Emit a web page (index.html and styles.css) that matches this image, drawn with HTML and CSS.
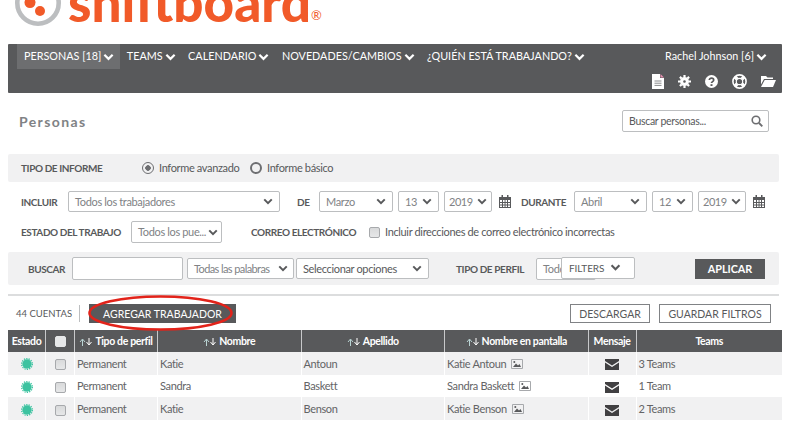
FILE: index.html
```html
<!DOCTYPE html>
<html lang="es">
<head>
<meta charset="utf-8">
<title>Personas</title>
<link rel="stylesheet" href="styles.css">
</head>
<body>
<svg class="defs" width="0" height="0">
  <defs>
    <symbol id="chev" viewBox="0 0 12 8"><path d="M1.500 1.500 6 6l4.500-4.500" fill="none" stroke="currentColor" stroke-width="2.400"/></symbol>
    <symbol id="cal" viewBox="0 0 12 13"><path d="M0 2h12v11H0zM1 5v2h2V5zm3 0v2h1.600V5zm2.500 0v2H8V5zM9 5v2h2V5zM1 8v1.600h2V8zm3 0v1.600h1.600V8zm2.500 0v1.600H8V8zM9 8v1.600h2V8zM1 10.500V12h2v-1.500zm3 0V12h1.600v-1.500zm2.500 0V12H8v-1.500zm2.500 0V12h2v-1.500z" fill="#58595b" fill-rule="evenodd"/><path d="M2.500 0h1.500v3H2.500zM8 0h1.500v3H8z" fill="#58595b"/></symbol>
    <symbol id="sort" viewBox="0 0 14 8"><path d="M3.500 8V1.500M1 4l2.500-3L6 4" fill="none" stroke="#b9d3d3" stroke-width="1"/><path d="M10 0v6.500M7.500 4 10 7l2.500-3" fill="none" stroke="#fff" stroke-width="1"/></symbol>
    <symbol id="mail" viewBox="0 0 14 11"><path d="M0 0h14v2L7 6.500 0 2z" fill="#414042"/><path d="M0 3.500 7 8l7-4.500V11H0z" fill="#414042"/></symbol>
    <symbol id="pic" viewBox="0 0 12 10"><path d="M.5.500h11v9H.500z" fill="none" stroke="#a7a9ac"/><path d="M2 8 5 4.500 7 6.500 8.500 5 10 8z" fill="#58595b"/><circle cx="3.300" cy="3" r="1" fill="#58595b"/></symbol>
    <symbol id="burst" viewBox="0 0 12 12"><circle cx="6" cy="6" r="4.700" fill="#3cc3a0"/><circle cx="6" cy="6" r="5.400" fill="none" stroke="#3cc3a0" stroke-width="1.200" stroke-dasharray="1.300 1.100"/></symbol>
  </defs>
</svg>

<header class="brand">
  <div class="brand-inner">
    <svg class="brand-mark" viewBox="0 0 46 46" width="46" height="46">
      <circle cx="23" cy="23" r="20.700" fill="none" stroke="#bcbec0" stroke-width="4.600"/>
      <circle cx="15" cy="22.500" r="5.500" fill="#f15a29"/>
      <circle cx="25" cy="31" r="5" fill="#f15a29"/>
      <circle cx="24" cy="12" r="5" fill="#f15a29"/>
    </svg>
    <span class="brand-name">shiftboard</span><span class="brand-reg">®</span>
  </div>
</header>

<nav class="nav">
  <div class="nav-top">
    <ul class="nav-menu">
      <li class="nav-item is-active">PERSONAS [18]<svg class="nav-chev"><use href="#chev"/></svg></li>
      <li class="nav-item">TEAMS<svg class="nav-chev"><use href="#chev"/></svg></li>
      <li class="nav-item">CALENDARIO<svg class="nav-chev"><use href="#chev"/></svg></li>
      <li class="nav-item">NOVEDADES/CAMBIOS<svg class="nav-chev"><use href="#chev"/></svg></li>
      <li class="nav-item">¿QUIÉN ESTÁ TRABAJANDO?<svg class="nav-chev"><use href="#chev"/></svg></li>
    </ul>
    <div class="nav-user">Rachel Johnson [6]<svg class="nav-chev"><use href="#chev"/></svg></div>
  </div>
  <div class="nav-icons">
    <svg width="12" height="15" viewBox="0 0 12 15"><path d="M0 0h8v4h4v11H0z" fill="#fff"/><path d="M8.500 0 12 3.500H8.500z" fill="#e58fb0"/><path d="M2.500 7h7M2.500 9.200h7M2.500 11.400h7" stroke="#8a8b8d" stroke-width="1"/></svg>
    <svg width="13" height="13" viewBox="0 0 13 13"><path d="M6.500 3.600a2.900 2.900 0 1 0 0 5.800 2.900 2.900 0 0 0 0-5.800z" fill="none" stroke="#fff" stroke-width="3.200"/><path d="M6.500 0v13M0 6.500h13M1.900 1.900l9.200 9.200M11.100 1.900l-9.200 9.200" stroke="#fff" stroke-width="2.200" stroke-dasharray="2.300 8.400 2.300"/></svg>
    <svg width="13" height="13" viewBox="0 0 13 13"><circle cx="6.500" cy="6.500" r="6.500" fill="#fff"/><path d="M4.300 5.100c0-2.700 4.400-2.700 4.400 0 0 1.600-2.200 1.500-2.200 3" fill="none" stroke="#58595b" stroke-width="1.700"/><path d="M5.500 9.200h2v1.800h-2z" fill="#58595b"/></svg>
    <svg width="15" height="15" viewBox="0 0 15 15"><circle cx="7.500" cy="7.500" r="6.600" fill="none" stroke="#fff" stroke-width="1.600"/><path d="M3 3l2.500 2.500M12 3 9.500 5.500M3 12l2.500-2.500M12 12 9.500 9.500" stroke="#fff" stroke-width="3.400"/><circle cx="7.500" cy="7.500" r="3.200" fill="#58595b" stroke="#fff" stroke-width="1.200"/></svg>
    <svg width="15" height="12" viewBox="0 0 15 12"><path d="M0 1h5l1.500 1.500H12V4H3L0 9.500z" fill="#fff"/><path d="M3.700 5H15l-3 7H0z" fill="#fff"/></svg>
  </div>
</nav>

<section class="title-row">
  <h1 class="title">Personas</h1>
  <div class="search">Buscar personas...
    <svg class="search-icon" width="12" height="12" viewBox="0 0 12 12"><circle cx="5" cy="5" r="3.800" fill="none" stroke="#6d6e71" stroke-width="1.600"/><path d="M8 8l3.300 3.300" stroke="#6d6e71" stroke-width="1.900"/></svg>
  </div>
</section>

<section class="band band-report">
  <span class="label w-report">TIPO DE INFORME</span>
  <span class="radio is-on"></span><span class="opt">Informe avanzado</span>
  <span class="radio"></span><span class="opt">Informe básico</span>
</section>

<section class="row row-dates">
  <span class="label w-42">INCLUIR</span>
  <div class="sel w-212">Todos los trabajadores<svg class="sel-chev"><use href="#chev"/></svg></div>
  <span class="label w-17 ml-12">DE</span>
  <div class="sel w-74">Marzo<svg class="sel-chev"><use href="#chev"/></svg></div>
  <div class="sel w-41">13<svg class="sel-chev"><use href="#chev"/></svg></div>
  <div class="sel w-48 sel-year">2019<svg class="sel-chev"><use href="#chev"/></svg></div>
  <svg class="cal"><use href="#cal"/></svg>
  <span class="label w-48 ml-5">DURANTE</span>
  <div class="sel w-73">Abril<svg class="sel-chev"><use href="#chev"/></svg></div>
  <div class="sel w-41">12<svg class="sel-chev"><use href="#chev"/></svg></div>
  <div class="sel w-48 sel-year">2019<svg class="sel-chev"><use href="#chev"/></svg></div>
  <svg class="cal"><use href="#cal"/></svg>
</section>

<section class="row row-status">
  <span class="label w-99">ESTADO DEL TRABAJO</span>
  <div class="sel w-91 ml-11 sel-tight">Todos los pue...<svg class="sel-chev"><use href="#chev"/></svg></div>
  <span class="label w-103 ml-29">CORREO ELECTRÓNICO</span>
  <span class="check ml-15"></span>
  <span class="opt ml-5">Incluir direcciones de correo electrónico incorrectas</span>
</section>

<section class="band band-search">
  <span class="label w-36">BUSCAR</span>
  <div class="field"></div>
  <div class="sel w-107 ml-4 sel-narrow">Todas las palabras<svg class="sel-chev"><use href="#chev"/></svg></div>
  <div class="sel w-133 ml-2 sel-dark">Seleccionar opciones<svg class="sel-chev"><use href="#chev"/></svg></div>
  <span class="label w-69 ml-27">TIPO DE PERFIL</span>
  <div class="profile">
    <div class="sel w-60 ml-11 profile-base">Todos</div>
    <div class="filters">FILTERS<svg class="sel-chev"><use href="#chev"/></svg></div>
  </div>
  <button class="apply">APLICAR</button>
</section>

<hr class="rule">

<section class="toolbar">
  <span class="count">44 CUENTAS</span>
  <span class="sep"></span>
  <div class="add-wrap">
    <button class="add">AGREGAR TRABAJADOR</button>
    <svg class="ring" width="148" height="37" viewBox="0 0 148 37"><ellipse cx="72.500" cy="18" rx="71" ry="16.500" fill="none" stroke="#e2231a" stroke-width="2.600"/></svg>
  </div>
  <button class="ghost ghost-first">DESCARGAR</button>
  <button class="ghost">GUARDAR FILTROS</button>
</section>

<table class="grid">
  <colgroup>
    <col class="c-state"><col class="c-check"><col class="c-type"><col class="c-name"><col class="c-name"><col class="c-name"><col class="c-msg"><col class="c-team">
  </colgroup>
  <thead>
    <tr>
      <th>Estado</th>
      <th><span class="check check-head"></span></th>
      <th><svg class="sort"><use href="#sort"/></svg>Tipo de perfil</th>
      <th><svg class="sort"><use href="#sort"/></svg>Nombre</th>
      <th><svg class="sort"><use href="#sort"/></svg>Apellido</th>
      <th><svg class="sort"><use href="#sort"/></svg>Nombre en pantalla</th>
      <th>Mensaje</th>
      <th>Teams</th>
    </tr>
  </thead>
  <tbody>
    <tr>
      <td class="mid"><svg class="burst"><use href="#burst"/></svg></td>
      <td class="mid"><span class="check"></span></td>
      <td>Permanent</td><td>Katie</td><td>Antoun</td>
      <td>Katie Antoun<svg class="pic"><use href="#pic"/></svg></td>
      <td class="mid"><svg class="mail"><use href="#mail"/></svg></td>
      <td>3 Teams</td>
    </tr>
    <tr>
      <td class="mid"><svg class="burst"><use href="#burst"/></svg></td>
      <td class="mid"><span class="check"></span></td>
      <td>Permanent</td><td>Sandra</td><td>Baskett</td>
      <td>Sandra Baskett<svg class="pic"><use href="#pic"/></svg></td>
      <td class="mid"><svg class="mail"><use href="#mail"/></svg></td>
      <td>1 Team</td>
    </tr>
    <tr>
      <td class="mid"><svg class="burst"><use href="#burst"/></svg></td>
      <td class="mid"><span class="check"></span></td>
      <td>Permanent</td><td>Katie</td><td>Benson</td>
      <td>Katie Benson<svg class="pic"><use href="#pic"/></svg></td>
      <td class="mid"><svg class="mail"><use href="#mail"/></svg></td>
      <td>2 Teams</td>
    </tr>
  </tbody>
</table>
</body>
</html>
```
FILE: styles.css
```css
* { box-sizing: border-box; }
html, body { height: 423px; overflow: hidden; }
body {
  margin: 0;
  padding: 0 12px 0 8px;
  background: #fff;
  color: #58595b;
  font: 11px/1.2 Lato, "Liberation Sans", sans-serif;
  letter-spacing: -.35px;
}
.defs { position: absolute; }

.brand { height: 44px; margin-left: -8px; overflow: hidden; }
.brand-inner { display: flex; align-items: flex-start; padding-left: 15px; }
.brand-mark { flex: none; margin-top: -20px; }
.brand-name {
  margin-left: 7px;
  color: #f15a29;
  font-size: 53px;
  font-weight: 900;
  line-height: 4px;
  letter-spacing: 0;
}
.brand-reg { margin-top: 9px; color: #f15a29; font-size: 13px; line-height: 13px; letter-spacing: 0; }

.nav {
  width: 774px;
  height: 49px;
  background: #58595b;
  border-radius: 1px;
  color: #fff;
  letter-spacing: 0;
}
.nav-top { display: flex; justify-content: space-between; height: 25px; padding-left: 9px; }
.nav-menu { display: flex; margin: 0; padding: 0; list-style: none; }
.nav-item {
  display: flex;
  align-items: center;
  padding: 0 5.500px 0 7px;
  font-size: 10.800px;
}
.nav-item.is-active { background: #6d6e70; }
.nav-chev { width: 11px; height: 8px; margin-left: 2px; }
.nav-user { display: flex; align-items: center; padding-right: 15px; font-size: 10.800px; }
.nav-icons { display: flex; justify-content: flex-end; align-items: center; gap: 14px; height: 24px; padding-right: 6px; }

.title-row { display: flex; justify-content: space-between; align-items: flex-start; height: 61px; padding: 17px 13px 0 11px; }
.title { margin: 3px 0 0; color: #808285; font-size: 14px; font-weight: 700; letter-spacing: 1.400px; line-height: 17px; }
.search {
  display: flex;
  justify-content: space-between;
  align-items: center;
  width: 147px;
  height: 22px;
  padding: 0 5px 0 6px;
  border: 1px solid #bcbec0;
  border-radius: 2px;
  letter-spacing: -.3px;
  font-size: 10.500px;
}

.label { flex: none; font-size: 10px; font-weight: 700; letter-spacing: -.4px; color: #58595b; white-space: nowrap; }
.opt { white-space: nowrap; }
.band { display: flex; align-items: center; background: #f1f1f2; width: 771px; border-radius: 2px; }
.band-report { height: 28px; padding-left: 13px; }
.w-report { width: 121px; }
.radio { flex: none; width: 12px; height: 12px; margin-right: 5px; border: 2px solid #6d6e71; border-radius: 50%; }
.radio.is-on { border-width: 1.500px; background: radial-gradient(circle, #6d6e71 0 2.500px, transparent 3px); }
.radio.is-on + .opt { width: 81px; margin-right: 10px; }

.row { display: flex; align-items: center; padding-left: 13px; }
.row-dates { height: 21px; margin-top: 9px; gap: 5px; }
.row-status { height: 22px; margin-top: 9px; }

.sel {
  flex: none;
  display: flex;
  align-items: center;
  height: 21px;
  padding: 0 6px;
  background: #fff;
  border: 1px solid #bcbec0;
  border-radius: 2px;
  color: #808285;
  white-space: nowrap;
}
.sel-chev { width: 10px; height: 7px; margin-left: auto; flex: none; color: #58595b; }
.sel-tight { padding-right: 3px; height: 22px; }
.sel-dark { color: #58595b; }
.sel-narrow { padding-right: 5px; letter-spacing: -.6px; }
.sel-year { padding: 0 4px; letter-spacing: -.5px; }
.w-17 { width: 17px; }
.w-36 { width: 36px; }
.w-42 { width: 42px; }
.w-60 { width: 60px; }
.w-69 { width: 69px; }
.w-99 { width: 99px; }
.w-103 { width: 103px; }
.w-212 { width: 212px; }
.w-74 { width: 74px; }
.w-73 { width: 73px; }
.w-41 { width: 41px; }
.w-48 { width: 48px; }
.w-91 { width: 91px; }
.w-107 { width: 107px; }
.w-133 { width: 133px; }
.ml-2 { margin-left: 2px; }
.ml-4 { margin-left: 4px; }
.ml-5 { margin-left: 5px; }
.ml-11 { margin-left: 11px; }
.ml-12 { margin-left: 12px; }
.ml-15 { margin-left: 15px; }
.ml-27 { margin-left: 27px; }
.ml-29 { margin-left: 29px; }
.cal { flex: none; width: 12px; height: 13px; margin-left: 2px; }

.check {
  display: inline-block;
  flex: none;
  width: 11px;
  height: 11px;
  background: linear-gradient(#d9dadb, #e6e7e8);
  border: 1px solid #a7a9ac;
  border-radius: 2px;
  vertical-align: middle;
}
.check-head { background: #e6e7e8; border-color: #e6e7e8; }

.band-search { height: 33px; margin-top: 9px; padding-left: 20px; }
.field { flex: none; width: 111px; height: 23px; margin-left: 8px; background: #fff; border: 1px solid #bcbec0; border-radius: 2px; }
.profile { position: relative; display: flex; flex: none; width: 170px; }
.profile-base { overflow: hidden; height: 22px; }
.filters {
  position: absolute;
  left: 36px;
  top: -1px;
  display: flex;
  align-items: center;
  width: 74px;
  height: 22px;
  padding: 0 0 0 7px;
  background: #fff;
  border: 1px solid #bcbec0;
  border-radius: 2px;
  letter-spacing: -.1px;
  font-size: 10px;
}
.filters .sel-chev { width: 11px; margin-left: 6px; }
.apply {
  width: 70px;
  height: 20px;
  padding: 0;
  background: #58595b;
  border: 0;
  color: #fff;
  font: 700 10.800px Lato, sans-serif;
}

.rule { width: 771px; height: 2px; margin: 9px 0 8px; background: #dcddde; border: 0; }

.toolbar { display: flex; align-items: center; height: 19px; padding-left: 8px; }
.count { width: 63px; font-size: 9.500px; letter-spacing: 0; }
.sep { width: 1px; height: 17px; background: #bcbec0; }
.add-wrap { position: relative; margin-left: 9px; }
.add {
  display: block;
  width: 147px;
  height: 19px;
  padding: 0;
  background: #58595b;
  border: 0;
  color: #fff;
  font: 10.500px Lato, sans-serif;
}
.ring { position: absolute; left: -1px; top: -9px; }
.ghost {
  width: 112px;
  height: 19px;
  margin-left: 9px;
  padding: 0;
  background: #fff;
  border: 1px solid #808285;
  color: #58595b;
  font: 10.500px Lato, sans-serif;
}
.ghost-first { width: 80px; margin-left: 334px; }

.grid { width: 774px; margin-top: 7px; table-layout: fixed; border-collapse: collapse; }
.c-state { width: 37.500px; }
.c-check { width: 29px; }
.c-type { width: 83px; }
.c-name { width: 143.500px; }
.c-msg { width: 48px; }
.grid th {
  height: 22px;
  padding: 0;
  background: #58595b;
  border-right: 1px solid #c7c8ca;
  color: #fff;
  font-size: 10.500px;
  font-weight: 700;
  letter-spacing: -.35px;
  white-space: nowrap;
}
.grid th:last-child, .grid td:last-child { border-right: 0; }
.sort { width: 14px; height: 8px; margin-right: 2px; vertical-align: -1px; }
.grid td {
  height: 22.700px;
  padding: 0 3px 0 2px;
  border-right: 1px solid #fff;
  color: #636466;
  white-space: nowrap;
}
.grid tbody tr:nth-child(odd) td { background: #f1f1f2; }
.grid .mid { padding: 0; text-align: center; }
.burst { width: 12px; height: 12px; vertical-align: middle; }
.pic { width: 12px; height: 10px; margin-left: 5px; vertical-align: -1px; }
.mail { width: 14px; height: 11px; vertical-align: -3px; }
```
